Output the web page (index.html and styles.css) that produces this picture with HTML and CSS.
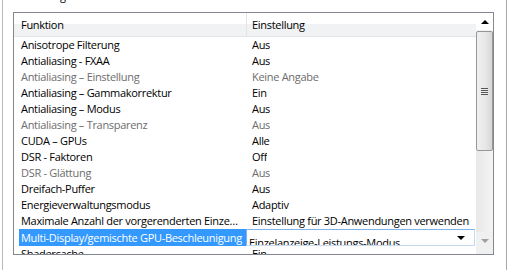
FILE: index.html
```html
<!DOCTYPE html>
<html lang="de">

<head>
    <meta charset="UTF-8">
    <title>Einstellungen</title>
    <link rel="stylesheet" href="styles.css">
</head>

<body>
    <div class="group">
        <div class="legend">Einstellungen:</div>
        <div class="list">
            <div class="list-main">
                <div class="header">
                    <div class="hcol1">Funktion</div>
                    <div class="hcol2">Einstellung</div>
                </div>
                <div class="rows">
                    <div class="row"><div class="c1">Anisotrope Filterung</div><div class="c2">Aus</div></div>
                    <div class="row"><div class="c1">Antialiasing - FXAA</div><div class="c2">Aus</div></div>
                    <div class="row off"><div class="c1">Antialiasing – Einstellung</div><div class="c2">Keine Angabe</div></div>
                    <div class="row"><div class="c1">Antialiasing – Gammakorrektur</div><div class="c2">Ein</div></div>
                    <div class="row"><div class="c1">Antialiasing – Modus</div><div class="c2">Aus</div></div>
                    <div class="row off"><div class="c1">Antialiasing – Transparenz</div><div class="c2">Aus</div></div>
                    <div class="row"><div class="c1">CUDA – GPUs</div><div class="c2">Alle</div></div>
                    <div class="row"><div class="c1">DSR - Faktoren</div><div class="c2">Off</div></div>
                    <div class="row off"><div class="c1">DSR - Glättung</div><div class="c2">Aus</div></div>
                    <div class="row"><div class="c1">Dreifach-Puffer</div><div class="c2">Aus</div></div>
                    <div class="row"><div class="c1">Energieverwaltungsmodus</div><div class="c2">Adaptiv</div></div>
                    <div class="row"><div class="c1">Maximale Anzahl der vorgerenderten Einze…</div><div class="c2">Einstellung für 3D-Anwendungen verwenden</div></div>
                    <div class="row selected">
                        <div class="c1">Multi-Display/gemischte GPU-Beschleunigung</div>
                        <div class="combo">
                            <span class="combo-text">Einzelanzeige-Leistungs-Modus</span>
                            <span class="combo-arrow"></span>
                        </div>
                    </div>
                    <div class="row"><div class="c1">Shadercache</div><div class="c2">Ein</div></div>
                </div>
            </div>
            <div class="scrollbar">
                <div class="sb-btn"><span class="arrow-up"></span></div>
                <div class="sb-thumb">
                    <span class="grip"></span>
                </div>
                <div class="sb-track"></div>
                <div class="sb-btn sb-btn-down"><span class="arrow-down"></span></div>
            </div>
        </div>
    </div>
</body>

</html>
```

FILE: styles.css
```css
body {
    margin: 0;
    background-color: #fff;
    font-family: "Open Sans", "Noto Sans", sans-serif;
    font-size: 11px;
    letter-spacing: -0.3px;
    color: #000;
    overflow: hidden;
}

.group {
    margin: -12px 0 0 2px;
    width: 481px;
    height: 282px;
    padding: 0 12px 0 10px;
    border-left: 1px solid #b8b8b8;
    border-right: 1px solid #a8a8a8;
}

.legend {
    height: 16px;
    line-height: 16px;
    margin-bottom: 8px;
}

.list {
    display: flex;
    height: 241px;
    border: 1px solid #828790;
    background-color: #fff;
}

.list-main {
    flex: 1;
    overflow: hidden;
}

.header {
    display: flex;
    height: 23px;
    line-height: 23px;
    border-bottom: 1px solid #e3e4e6;
    background: linear-gradient(#fff 0, #fff 50%, #f1f2f4 50%, #f1f2f4 100%);
}

.hcol1 {
    flex-shrink: 0;
    width: 225px;
    padding-left: 7px;
    border-right: 1px solid #e3e4e6;
}

.hcol2 {
    padding-left: 5px;
}

.rows {
    height: 217px;
    overflow: hidden;
}

.row {
    display: flex;
    height: 16px;
    line-height: 16px;
    white-space: nowrap;
}

.row.off {
    color: #6d6d6d;
}

.c1 {
    flex-shrink: 0;
    width: 225px;
    margin-left: 5px;
    padding-left: 2px;
    overflow: hidden;
}

.c2 {
    padding-left: 6px;
    overflow: hidden;
}

.row.selected {
    height: 17px;
    line-height: 17px;
}

.row.selected .c1 {
    background-color: #3399ff;
    color: #fff;
}

.combo {
    flex-shrink: 0;
    display: flex;
    width: 227px;
    height: 15px;
    border: 1px solid #c6d9ef;
    border-color: #7eb4ea #c6d9ef #c6d9ef #7eb4ea;
    overflow: hidden;
}

.combo-text {
    flex: 1;
    padding: 5px 0 0 2px;
    line-height: 15px;
}

.combo-arrow {
    width: 0;
    height: 0;
    margin: 6px 9px 0 0;
    border-left: 4px solid transparent;
    border-right: 4px solid transparent;
    border-top: 4px solid #000;
}

.scrollbar {
    width: 17px;
    display: flex;
    flex-direction: column;
    background-color: #f0f0f0;
}

.sb-btn {
    height: 17px;
    display: flex;
    align-items: center;
    justify-content: center;
    background-color: #fff;
}

.sb-btn-down {
    height: 22px;
    align-items: flex-start;
    padding-top: 7px;
    box-sizing: border-box;
    background-color: #f0f0f0;
}

.arrow-up {
    width: 0;
    height: 0;
    border-left: 4px solid transparent;
    border-right: 4px solid transparent;
    border-bottom: 4px solid #000;
}

.arrow-down {
    width: 0;
    height: 0;
    border-left: 4px solid transparent;
    border-right: 4px solid transparent;
    border-top: 4px solid #a0a0a0;
}

.sb-thumb {
    height: 118px;
    margin-top: 1px;
    border: 1px solid #979797;
    border-radius: 2px;
    background: linear-gradient(to right, #f0f0f0, #e6e6e6 60%, #d6d6d6);
    display: flex;
    align-items: center;
    justify-content: center;
}

.grip {
    width: 7px;
    height: 7px;
    background: repeating-linear-gradient(#555 0, #555 1px, #eee 1px, #eee 2px);
}

.sb-track {
    flex: 1;
    background: linear-gradient(to right, #e8e8e8, #f4f4f4);
}
```
